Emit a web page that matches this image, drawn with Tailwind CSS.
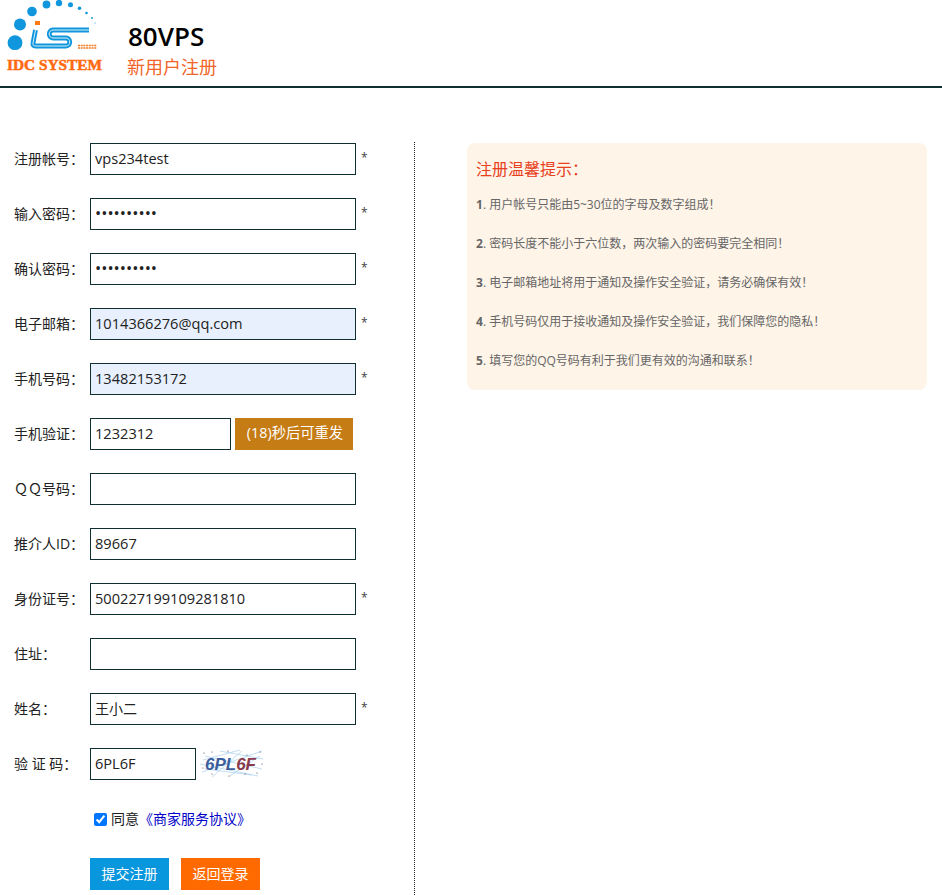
<!DOCTYPE html>
<html lang="zh-CN">
<head>
<meta charset="utf-8">
<script src="https://cdn.jsdelivr.net/npm/@tailwindcss/browser@4"></script>
<title>新用户注册</title>
</head>
<body class="bg-white font-['Open_Sans','Noto_Sans_CJK_SC',sans-serif] text-[#222] h-[895px] overflow-hidden">
<header class="h-[88px] border-b-2 border-[#0f2f33] flex items-start">
  <svg class="shrink-0" width="105" height="76" viewBox="0 0 105 76">
    <g fill="#0f96dc">
      <circle cx="15" cy="42.700" r="7.400"/><circle cx="20" cy="24.500" r="6"/><circle cx="32" cy="11.500" r="4.800"/><circle cx="46.500" cy="4.500" r="3.900"/><circle cx="59" cy="3" r="3.200"/><circle cx="70.500" cy="4.700" r="2.500"/><circle cx="79.500" cy="8.300" r="1.800"/><circle cx="86.500" cy="13" r="1.300"/><circle cx="92" cy="18" r=".9"/><circle cx="95" cy="23" r=".6"/>
    </g>
    <rect x="35" y="21" width="5" height="4" fill="#ff7a10"/>
    <g fill="none" stroke-linejoin="round">
      <path d="M35.500 30 33 43c-.5 2 .5 3 2.500 3H66c5 0 5-8 0-8H53c-5 0-5-8 0-8h36" stroke="#0f96dc" stroke-width="4.800"/>
      <path d="M35.500 30 33 43c-.5 2 .5 3 2.500 3H66c5 0 5-8 0-8H53c-5 0-5-8 0-8h36" stroke="#d8f0fb" stroke-width="1"/>
    </g>
    <path d="M78 45.500h19M78 48h19" stroke="#f47a20" stroke-width="1.700" stroke-dasharray="2 .7" fill="none"/>
    <text x="7" y="70" font-family="Liberation Serif" font-weight="700" font-size="15" fill="#ff6a10" stroke="#ff6a10" stroke-width=".5" textLength="95" lengthAdjust="spacingAndGlyphs">IDC SYSTEM</text>
  </svg>
  <div class="ml-[22px] pt-[17px]">
    <h1 class="text-[26px] leading-[38px] font-semibold text-black pl-px">80VPS</h1>
    <p class="text-[18px] leading-[24px] text-[#f0662a]">新用户注册</p>
  </div>
</header>
<main class="flex items-start mt-[54px]">
  <form class="w-[415px] h-[753px] border-r border-dotted border-[#222] pl-[14px] pt-px text-sm shrink-0">
    <div class="flex items-center h-8 mb-[23px]"><label class="w-[76px]">注册帐号：</label><input class="w-[266px] h-8 border border-[#0f2f33] pl-1 pb-[3px] text-[14.600px] outline-none" value="vps234test"><span class="ml-[5px] mb-[3px] text-xs text-[#444]">*</span></div>
    <div class="flex items-center h-8 mb-[23px]"><label class="w-[76px]">输入密码：</label><input type="password" class="w-[266px] h-8 border border-[#0f2f33] pl-1 pb-[3px] text-[16.500px] outline-none" value="1234567890"><span class="ml-[5px] mb-[3px] text-xs text-[#444]">*</span></div>
    <div class="flex items-center h-8 mb-[23px]"><label class="w-[76px]">确认密码：</label><input type="password" class="w-[266px] h-8 border border-[#0f2f33] pl-1 pb-[3px] text-[16.500px] outline-none" value="1234567890"><span class="ml-[5px] mb-[3px] text-xs text-[#444]">*</span></div>
    <div class="flex items-center h-8 mb-[23px]"><label class="w-[76px]">电子邮箱：</label><input class="w-[266px] h-8 border border-[#0f2f33] bg-[#e8f0fe] pl-1 pb-[3px] text-[14.600px] outline-none" value="1014366276@qq.com"><span class="ml-[5px] mb-[3px] text-xs text-[#444]">*</span></div>
    <div class="flex items-center h-8 mb-[23px]"><label class="w-[76px]">手机号码：</label><input class="w-[266px] h-8 border border-[#0f2f33] bg-[#e8f0fe] pl-1 pb-[3px] text-[14.600px] outline-none" value="13482153172"><span class="ml-[5px] mb-[3px] text-xs text-[#444]">*</span></div>
    <div class="flex items-center h-8 mb-[23px]"><label class="w-[76px]">手机验证：</label><input class="w-[141px] h-8 border border-[#0f2f33] pl-1 pb-[3px] text-[14.600px] outline-none" value="1232312"><button type="button" class="ml-1 w-[118px] h-8 pl-[2px] pb-px bg-[#c67c14] text-white text-[14.300px]">(18)秒后可重发</button></div>
    <div class="flex items-center h-8 mb-[23px]"><label class="w-[76px]">ＱＱ号码：</label><input class="w-[266px] h-8 border border-[#0f2f33] pl-1 pb-[3px] text-[14.600px] outline-none"></div>
    <div class="flex items-center h-8 mb-[23px]"><label class="w-[76px]">推介人ID：</label><input class="w-[266px] h-8 border border-[#0f2f33] pl-1 pb-[3px] text-[14.600px] outline-none" value="89667"></div>
    <div class="flex items-center h-8 mb-[23px]"><label class="w-[76px]">身份证号：</label><input class="w-[266px] h-8 border border-[#0f2f33] pl-1 pb-[3px] text-[14.600px] outline-none" value="500227199109281810"><span class="ml-[5px] mb-[3px] text-xs text-[#444]">*</span></div>
    <div class="flex items-center h-8 mb-[23px]"><label class="w-[76px]">住址：</label><input class="w-[266px] h-8 border border-[#0f2f33] pl-1 pb-[3px] text-[14.600px] outline-none"></div>
    <div class="flex items-center h-8 mb-[23px]"><label class="w-[76px]">姓名：</label><input class="w-[266px] h-8 border border-[#0f2f33] pl-1 pb-[3px] text-sm outline-none" value="王小二"><span class="ml-[5px] mb-[3px] text-xs text-[#444]">*</span></div>
    <div class="flex items-center h-8 mb-6"><label class="w-[76px]">验 证 码：</label><input class="w-[106px] h-8 border border-[#0f2f33] pl-1 pb-[3px] text-[14.600px] outline-none" value="6PL6F">
      <svg class="ml-1" width="64" height="32" viewBox="0 0 64 32">
        <g stroke="#a9cfee" stroke-width=".7" fill="none"><path d="M2 24 62 3M5 8 62 21M0 16 58 28M12 29 42 3M20 3 63 11M5 21 52 27M30 28 60 8M3 12 40 2"/></g>
        <g fill="#445"><circle cx="4" cy="5" r=".6"/><circle cx="12" cy="4" r=".6"/><circle cx="28" cy="3" r=".6"/><circle cx="47" cy="7" r=".6"/><circle cx="60" cy="4" r=".6"/><circle cx="62" cy="16" r=".6"/><circle cx="57" cy="25" r=".6"/><circle cx="45" cy="26" r=".6"/><circle cx="29" cy="28" r=".6"/><circle cx="12" cy="26" r=".6"/><circle cx="3" cy="20" r=".6"/></g>
        <text x="5" y="22" font-family="Liberation Sans" font-weight="700" font-style="italic" font-size="17" fill="#3c5f9c" textLength="51">6PL<tspan fill="#8a3a4c">6F</tspan></text>
      </svg>
    </div>
    <div class="flex items-center h-[30px] ml-[76px] pl-1 mb-6"><input type="checkbox" checked class="w-[13px] h-[13px] m-0"><span class="ml-1">同意<a class="text-[#0000c8]" href="#">《商家服务协议》</a></span></div>
    <div class="flex ml-[76px] gap-3"><button type="button" class="w-[79px] h-8 bg-[#0896dc] text-white text-sm">提交注册</button><button type="button" class="w-[79px] h-8 bg-[#ff6a00] text-white text-sm">返回登录</button></div>
  </form>
  <aside class="ml-[52px] w-[460px] h-[247px] mt-px bg-[#fef4e8] rounded-lg px-[9px] pt-4">
    <h2 class="text-base leading-5 text-[#e8401c]">注册温馨提示：</h2>
    <ol class="mt-4 text-xs text-[#666]">
      <li class="h-[39px] leading-[20px]"><b>1</b>. 用户帐号只能由5~30位的字母及数字组成！</li>
      <li class="h-[39px] leading-[20px]"><b>2</b>. 密码长度不能小于六位数，两次输入的密码要完全相同！</li>
      <li class="h-[39px] leading-[20px]"><b>3</b>. 电子邮箱地址将用于通知及操作安全验证，请务必确保有效！</li>
      <li class="h-[39px] leading-[20px]"><b>4</b>. 手机号码仅用于接收通知及操作安全验证，我们保障您的隐私！</li>
      <li class="h-[39px] leading-[20px]"><b>5</b>. 填写您的QQ号码有利于我们更有效的沟通和联系！</li>
    </ol>
  </aside>
</main>
</body>
</html>
